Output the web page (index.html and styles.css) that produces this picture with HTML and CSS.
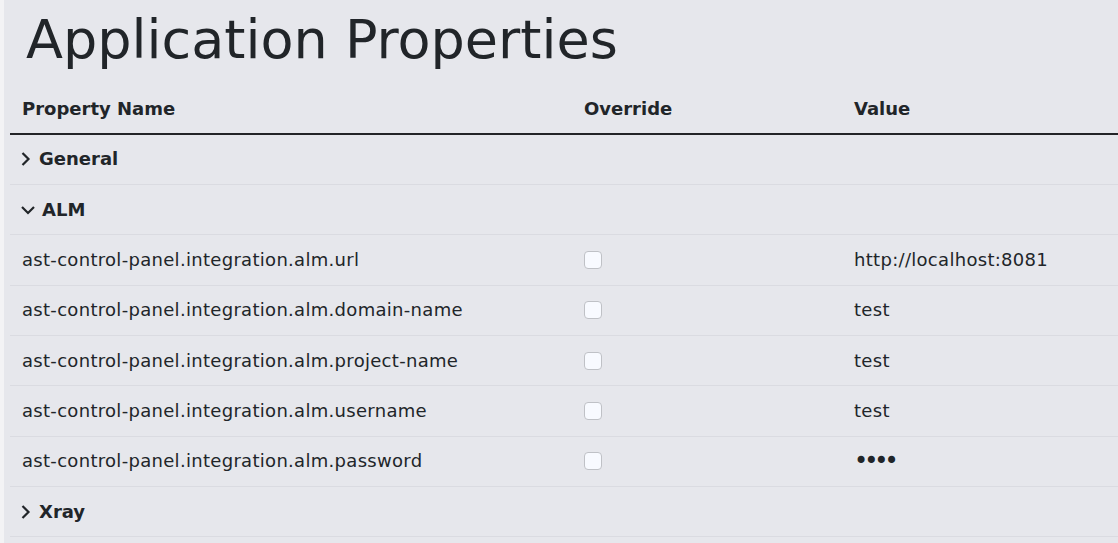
FILE: index.html
```html
<!DOCTYPE html>
<html lang="en">
<head>
  <meta charset="UTF-8" />
  <title>Application Properties</title>
  <link rel="stylesheet" href="styles.css">
</head>
<body>

<div class="page">
  <h1>Application Properties</h1>

  <table class="props">
    <thead>
      <tr>
        <th class="col-name">Property Name</th>
        <th class="col-override">Override</th>
        <th class="col-value">Value</th>
      </tr>
    </thead>
    <tbody>
      <tr class="group">
        <td colspan="3">
          <svg class="chev" width="12" height="14" viewBox="0 0 12 14"><path d="M1.5 1 L7.5 7 L1.5 13" /></svg>General
        </td>
      </tr>
      <tr class="group">
        <td colspan="3">
          <svg class="chev open" width="14" height="14" viewBox="0 0 14 14"><path d="M1 4 L7 10 L13 4" /></svg>ALM
        </td>
      </tr>
      <tr>
        <td>ast-control-panel.integration.alm.url</td>
        <td><input type="checkbox" class="check"></td>
        <td>http://localhost:8081</td>
      </tr>
      <tr>
        <td>ast-control-panel.integration.alm.domain-name</td>
        <td><input type="checkbox" class="check"></td>
        <td>test</td>
      </tr>
      <tr>
        <td>ast-control-panel.integration.alm.project-name</td>
        <td><input type="checkbox" class="check"></td>
        <td>test</td>
      </tr>
      <tr>
        <td>ast-control-panel.integration.alm.username</td>
        <td><input type="checkbox" class="check"></td>
        <td>test</td>
      </tr>
      <tr>
        <td>ast-control-panel.integration.alm.password</td>
        <td><input type="checkbox" class="check"></td>
        <td class="secret">&bull;&bull;&bull;&bull;</td>
      </tr>
      <tr class="group">
        <td colspan="3">
          <svg class="chev" width="12" height="14" viewBox="0 0 12 14"><path d="M1.5 1 L7.5 7 L1.5 13" /></svg>Xray
        </td>
      </tr>
    </tbody>
  </table>
</div>

</body>
</html>
```

FILE: styles.css
```css
html, body {
  margin: 0;
  height: 100%;
}
body {
  background: #f3f3f5;
  color: #212529;
  font-family: "DejaVu Sans", Verdana, sans-serif;
  font-size: 18px;
  overflow: hidden;
}
.page {
  margin-left: 4px;
  min-height: 100%;
  background: #e6e7ec;
  padding: 8px 0 0 6px;
}
h1 {
  font-size: 54px;
  font-weight: 400;
  line-height: 1.2;
  margin: 0 0 11px 16px;
}
.props {
  width: 1120px;
  border-collapse: collapse;
}
.props th,
.props td {
  text-align: left;
  padding: 12.67px 12px;
  line-height: 24px;
  border-bottom: 1px solid #dadbe1;
  vertical-align: middle;
  letter-spacing: 0.3px;
}
.props th {
  font-weight: 700;
  letter-spacing: 0;
  border-bottom: 2px solid #232427;
  padding-top: 13px;
  padding-bottom: 12px;
}
.col-name {
  width: 538px;
}
.col-override {
  width: 246px;
}
.group td {
  font-weight: 700;
  letter-spacing: 0;
}
.chev {
  display: inline-block;
  vertical-align: -1px;
  margin: 0 6px 0 -1px;
}
.chev path {
  fill: none;
  stroke: #212529;
  stroke-width: 2.2;
}
.chev.open {
  margin: 0 7px 0 -1px;
}
.check {
  appearance: none;
  -webkit-appearance: none;
  width: 18px;
  height: 18px;
  margin: 0;
  display: block;
  border: 1px solid #bfc1c6;
  border-radius: 4px;
  background: #f8faff;
}
.props .secret {
  font-size: 24px;
  line-height: 24px;
  letter-spacing: -4px;
}
```
